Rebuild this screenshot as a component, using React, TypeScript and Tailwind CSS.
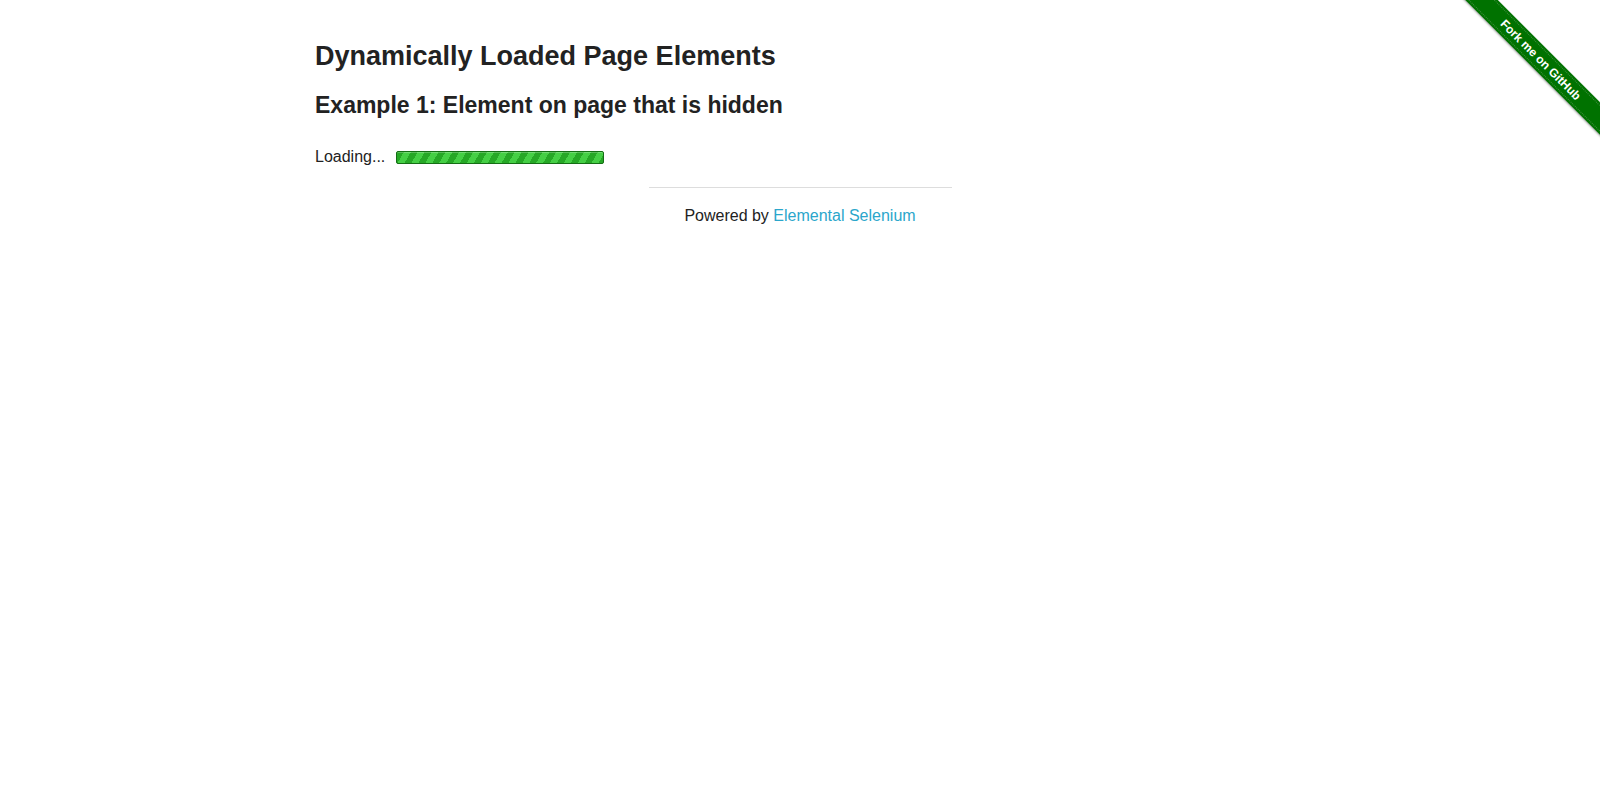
const ForkRibbon = () => (
  <a
    href="#"
    className="absolute top-0 right-0 w-[149px] h-[149px] overflow-hidden"
  >
    <div className="absolute left-[-22px] top-[48px] w-[224px] h-[23px] rotate-45 bg-[#007200] shadow-[0_1px_2px_rgba(0,0,0,0.35)] flex items-center justify-center">
      <div className="absolute inset-x-0 top-[2px] border-t border-dotted border-[#3f8f3f]" />
      <div className="absolute inset-x-0 bottom-[2px] border-t border-dotted border-[#3f8f3f]" />
      <span className="text-white font-bold text-[12px] font-['Liberation_Sans',Arial,sans-serif]">
        Fork me on GitHub
      </span>
    </div>
  </a>
);

const LoadingBar = () => (
  <div className="w-[208px] h-[13px] rounded-[2px] border border-[#146e14] bg-[#24a524] bg-[repeating-linear-gradient(120deg,#26a826_0px,#26a826_6px,#45cf45_6px,#45cf45_12px)] shadow-[inset_0_1px_0_rgba(255,255,255,0.25)]" />
);

export default function App() {
  return (
    <div className="relative min-h-[786px] bg-white text-[#222] font-['Liberation_Sans',Arial,sans-serif]">
      <ForkRibbon />

      <div className="max-w-[1000px] mx-auto px-[15px] pt-[37px]">
        <h3 className="text-[27px] leading-[38px] font-bold text-[#222]">
          Dynamically Loaded Page Elements
        </h3>
        <h4 className="mt-[14px] text-[23px] leading-[32px] font-bold text-[#222]">
          Example 1: Element on page that is hidden
        </h4>

        {/* loading row */}
        <div className="mt-[24px] flex items-center h-[24px] text-[16px]">
          <span>Loading...</span>
          <div className="ml-[11px]">
            <LoadingBar />
          </div>
        </div>
      </div>

      {/* footer */}
      <div className="max-w-[1000px] mx-auto flex justify-center">
        <div className="w-[333px] px-[15px]">
          <hr className="mt-[18px] border-0 border-t border-[#ddd]" />
          <div className="mt-[16px] text-center text-[16px] leading-[24px]">
            Powered by{" "}
            <a href="#" className="text-[#2ba6cb]">
              Elemental Selenium
            </a>
          </div>
        </div>
      </div>
    </div>
  );
}
